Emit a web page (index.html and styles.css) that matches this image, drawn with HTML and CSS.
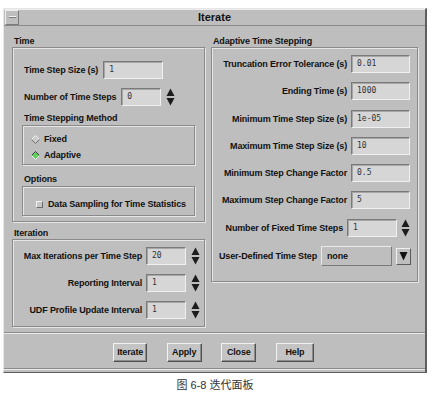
FILE: index.html
```html
<!DOCTYPE html>
<html lang="zh">
<head>
  <meta charset="UTF-8">
  <title>Iterate</title>
  <link rel="stylesheet" href="styles.css">
</head>
<body>
  <div class="window">
    <div class="titlebar">
      <span class="menu-btn"><span class="menu-dash"></span></span>
      <span class="title">Iterate</span>
    </div>

    <div class="content">
      <!-- left column -->
      <div class="col col-left">
        <div class="group-title">Time</div>
        <div class="group group-time">
          <div class="row">
            <span class="lbl">Time Step Size (s)</span>
            <span class="field w60">1</span>
          </div>
          <div class="row row-gap">
            <span class="lbl">Number of Time Steps</span>
            <span class="field w40">0</span>
            <svg class="spin" width="9" height="18" viewBox="0 0 9 18"><polygon points="4.5,0.5 8.5,8 0.5,8" fill="#1c1c1c"/><polygon points="0.5,10 8.5,10 4.5,17.5" fill="#1c1c1c"/></svg>
          </div>
          <div class="sub-title">Time Stepping Method</div>
          <div class="subgroup radios">
            <div class="radio-row">
              <svg class="radio" width="9" height="9" viewBox="0 0 9 9"><polygon points="4.5,0.5 8.5,4.5 4.5,8.5 0.5,4.5" fill="#cacaca"/><polyline points="0.5,4.5 4.5,0.5 8.5,4.5" stroke="#f2f2f2" fill="none"/><polyline points="0.5,4.5 4.5,8.5 8.5,4.5" stroke="#6e6e6e" fill="none"/></svg>
              <span>Fixed</span>
            </div>
            <div class="radio-row">
              <svg class="radio" width="9" height="9" viewBox="0 0 9 9"><polygon points="4.5,0.5 8.5,4.5 4.5,8.5 0.5,4.5" fill="#5fcf5f"/><polyline points="0.5,4.5 4.5,0.5 8.5,4.5" stroke="#3c3c3c" fill="none"/><polyline points="0.5,4.5 4.5,8.5 8.5,4.5" stroke="#e8f5e8" fill="none"/></svg>
              <span>Adaptive</span>
            </div>
          </div>
          <div class="sub-title opt-title">Options</div>
          <div class="subgroup checks">
            <div class="check-row">
              <span class="check"></span>
              <span>Data Sampling for Time Statistics</span>
            </div>
          </div>
        </div>

        <div class="group-title iter-title">Iteration</div>
        <div class="group group-iter">
          <div class="irow">
            <span class="ilbl">Max Iterations per Time Step</span>
            <span class="field w40">20</span>
            <svg class="spin" width="9" height="18" viewBox="0 0 9 18"><polygon points="4.5,0.5 8.5,8 0.5,8" fill="#1c1c1c"/><polygon points="0.5,10 8.5,10 4.5,17.5" fill="#1c1c1c"/></svg>
          </div>
          <div class="irow">
            <span class="ilbl">Reporting Interval</span>
            <span class="field w40">1</span>
            <svg class="spin" width="9" height="18" viewBox="0 0 9 18"><polygon points="4.5,0.5 8.5,8 0.5,8" fill="#1c1c1c"/><polygon points="0.5,10 8.5,10 4.5,17.5" fill="#1c1c1c"/></svg>
          </div>
          <div class="irow">
            <span class="ilbl">UDF Profile Update Interval</span>
            <span class="field w40">1</span>
            <svg class="spin" width="9" height="18" viewBox="0 0 9 18"><polygon points="4.5,0.5 8.5,8 0.5,8" fill="#1c1c1c"/><polygon points="0.5,10 8.5,10 4.5,17.5" fill="#1c1c1c"/></svg>
          </div>
        </div>
      </div>

      <!-- right column -->
      <div class="col col-right">
        <div class="group-title">Adaptive Time Stepping</div>
        <div class="group group-adapt">
          <div class="arow">
            <span class="albl">Truncation Error Tolerance (s)</span>
            <span class="field w59">0.01</span>
          </div>
          <div class="arow">
            <span class="albl">Ending Time (s)</span>
            <span class="field w59">1000</span>
          </div>
          <div class="arow">
            <span class="albl">Minimum Time Step Size (s)</span>
            <span class="field w59">1e-05</span>
          </div>
          <div class="arow">
            <span class="albl">Maximum Time Step Size (s)</span>
            <span class="field w59">10</span>
          </div>
          <div class="arow">
            <span class="albl">Minimum Step Change Factor</span>
            <span class="field w59">0.5</span>
          </div>
          <div class="arow">
            <span class="albl">Maximum Step Change Factor</span>
            <span class="field w59">5</span>
          </div>
          <div class="arow">
            <span class="albl">Number of Fixed Time Steps</span>
            <span class="field w50">1</span>
            <svg class="spin spin-r" width="9" height="18" viewBox="0 0 9 18"><polygon points="4.5,0.5 8.5,8 0.5,8" fill="#1c1c1c"/><polygon points="0.5,10 8.5,10 4.5,17.5" fill="#1c1c1c"/></svg>
          </div>
          <div class="arow drop-row">
            <span class="albl">User-Defined Time Step</span>
            <span class="drop-field">none</span>
            <span class="drop-btn"><svg width="9" height="10" viewBox="0 0 9 10"><polygon points="0.5,1 8.5,1 4.5,9.5" fill="#111"/></svg></span>
          </div>
        </div>
      </div>
    </div>

    <div class="buttons">
      <span class="btn b-iter">Iterate</span>
      <span class="btn b-apply">Apply</span>
      <span class="btn b-close">Close</span>
      <span class="btn b-help">Help</span>
    </div>
  </div>
  <div class="caption">图 6-8 迭代面板</div>
</body>
</html>
```

FILE: styles.css
```css
html, body {
  margin: 0;
  padding: 0;
  background: #fff;
}
body {
  font-family: "Liberation Sans", Arial, sans-serif;
  font-size: 9px;
  font-weight: bold;
  letter-spacing: -0.15px;
  color: #111;
}

.window {
  box-sizing: border-box;
  width: 424px;
  height: 365px;
  margin: 8px 0 0 3px;
  background: #bebebe;
  border: 1px solid;
  border-color: #e6e6e6 #5e5e5e #5e5e5e #e6e6e6;
  border-right-width: 2px;
  display: flex;
  flex-direction: column;
}

/* title bar */
.titlebar {
  box-sizing: border-box;
  height: 17px;
  display: flex;
  align-items: center;
  border-bottom: 1px solid #8a8a8a;
  box-shadow: inset 0 1px 0 #ececec;
}
.menu-btn {
  box-sizing: border-box;
  width: 14px;
  height: 15px;
  margin-left: 1px;
  border: 1px solid;
  border-color: #eeeeee #7c7c7c #7c7c7c #eeeeee;
  display: flex;
  align-items: center;
  justify-content: center;
}
.menu-dash {
  width: 7px;
  height: 1px;
  background: #f2f2f2;
  border-bottom: 1px solid #7c7c7c;
}
.title {
  flex: 1;
  margin-right: 15px;
  text-align: center;
  font-size: 11px;
  letter-spacing: 0;
}

/* content */
.content {
  flex: 1;
  display: flex;
  gap: 6px;
  padding: 9px 7px 0 8px;
}
.col-left { width: 193px; }
.col-right { width: 207px; }

.group-title {
  height: 12px;
  line-height: 12px;
  padding-left: 2px;
}
.iter-title { margin-top: 5px; }

.group {
  box-sizing: border-box;
  border: 1px solid #8a8a8a;
  box-shadow: inset 1px 1px 0 #e6e6e6, 1px 1px 0 #e6e6e6;
}
.group-time {
  height: 175px;
  padding: 13px 9px 0 9px;
}
.group-iter {
  height: 88px;
  padding: 7px 4px 0 2px;
}
.group-adapt {
  height: 235px;
  padding: 7px 7px 0 0;
}

.row {
  display: flex;
  align-items: center;
  height: 18px;
  padding-left: 2px;
}
.row-gap { margin-top: 9px; }
.lbl { margin-right: 5px; }

.sub-title {
  height: 12px;
  line-height: 12px;
  margin-top: 6px;
  padding-left: 2px;
}
.opt-title { margin-top: 8px; }

.subgroup {
  box-sizing: border-box;
  margin-top: 1px;
  border: 1px solid #8a8a8a;
  box-shadow: inset 1px 1px 0 #e6e6e6, 1px 1px 0 #e6e6e6;
}
.radios {
  height: 40px;
  padding: 5px 0 0 8px;
}
.radio-row {
  display: flex;
  align-items: center;
  height: 16px;
}
.radio { margin-right: 4px; }

.checks {
  height: 30px;
  padding: 9px 0 0 13px;
}
.check-row {
  display: flex;
  align-items: center;
  height: 16px;
}
.check {
  box-sizing: border-box;
  width: 7px;
  height: 7px;
  margin-right: 5px;
  background: #c6c6c6;
  border: 1px solid;
  border-color: #f2f2f2 #6a6a6a #6a6a6a #f2f2f2;
}

/* text fields */
.field {
  box-sizing: border-box;
  height: 18px;
  line-height: 16px;
  padding-left: 5px;
  background: #d6d6d6;
  border: 1px solid;
  border-color: #7a7a7a #f0f0f0 #f0f0f0 #7a7a7a;
  box-shadow: inset 1px 1px 0 #a6a6a6;
  font-family: "DejaVu Sans Mono", "Liberation Mono", monospace;
  font-size: 8px;
  font-weight: normal;
  letter-spacing: 0;
  color: #333;
}
.w40 { width: 40px; }
.w50 { width: 50px; }
.w59 { width: 59px; }
.w60 { width: 60px; }

.spin { margin-left: 5px; }
.spin-r { margin-left: 4px; }

/* iteration rows */
.irow {
  display: flex;
  align-items: center;
  height: 18px;
  margin-bottom: 9px;
}
.ilbl {
  width: 127px;
  margin-right: 4px;
  text-align: right;
  white-space: nowrap;
}

/* adaptive rows */
.arow {
  display: flex;
  align-items: center;
  justify-content: flex-end;
  height: 18px;
  margin-bottom: 9.3px;
}
.albl {
  margin-right: 4px;
  white-space: nowrap;
}
.drop-row {
  height: 20px;
  margin-right: -1px;
}
.drop-field {
  box-sizing: border-box;
  width: 71px;
  height: 20px;
  line-height: 18px;
  padding-left: 5px;
  border: 1px solid;
  border-color: #eaeaea #7a7a7a #7a7a7a #eaeaea;
}
.drop-btn {
  box-sizing: border-box;
  width: 15px;
  height: 17px;
  margin-left: 4px;
  border: 1px solid;
  border-color: #f0f0f0 #5a5a5a #5a5a5a #f0f0f0;
  display: flex;
  align-items: center;
  justify-content: center;
}

/* button bar */
.buttons {
  box-sizing: border-box;
  height: 37px;
  margin-bottom: 3px;
  padding: 10px 2px 0 0;
  display: flex;
  justify-content: center;
  gap: 19.6px;
  border-top: 1px solid #8a8a8a;
  border-bottom: 1px solid #8a8a8a;
  box-shadow: inset 0 1px 0 #ececec, 0 1px 0 #ececec;
}
.btn {
  box-sizing: border-box;
  height: 19px;
  line-height: 17px;
  text-align: center;
  background: #c4c4c4;
  border: 1px solid;
  border-color: #f2f2f2 #505050 #505050 #f2f2f2;
  box-shadow: inset -1px -1px 0 #8c8c8c;
}
.b-iter { width: 34px; }
.b-apply { width: 35px; }
.b-close { width: 35px; }
.b-help { width: 38px; }

.caption {
  width: 430px;
  margin-top: 3px;
  text-align: center;
  font-family: "Liberation Sans", "Noto Sans CJK SC", sans-serif;
  font-size: 11px;
  font-weight: normal;
  letter-spacing: 0;
  color: #333;
}
```
